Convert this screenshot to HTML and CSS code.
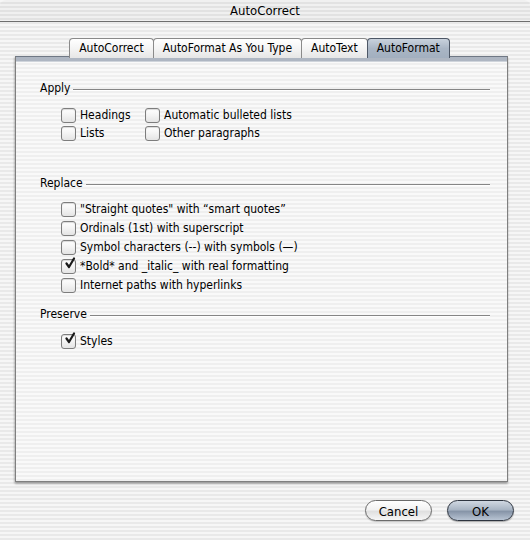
FILE: index.html
```html
<!DOCTYPE html>
<html>
<head>
<meta charset="utf-8">
<link rel="stylesheet" href="styles.css">
</head>
<body>
<div class="window">
  <div class="titlebar">AutoCorrect</div>
  <div class="tabs">
    <div class="tab">AutoCorrect</div>
    <div class="tab">AutoFormat As You Type</div>
    <div class="tab">AutoText</div>
    <div class="tab active">AutoFormat</div>
  </div>
  <div class="panel">
    <div class="group">
      <div class="group-head"><span class="group-title">Apply</span><span class="rule"></span></div>
      <div class="grid2">
        <label class="check"><span class="box"></span>Headings</label>
        <label class="check"><span class="box"></span>Automatic bulleted lists</label>
        <label class="check"><span class="box"></span>Lists</label>
        <label class="check"><span class="box"></span>Other paragraphs</label>
      </div>
    </div>
    <div class="group replace">
      <div class="group-head"><span class="group-title">Replace</span><span class="rule"></span></div>
      <div class="list">
        <label class="check"><span class="box"></span>"Straight quotes" with “smart quotes”</label>
        <label class="check"><span class="box"></span>Ordinals (1st) with superscript</label>
        <label class="check"><span class="box"></span>Symbol characters (--) with symbols (—)</label>
        <label class="check"><span class="box on"><svg viewBox="0 0 14 14" width="14" height="14"><path d="M3.5 6.5 L6 10 L11 1.5" fill="none" stroke="#1a1a1a" stroke-width="2.2" stroke-linecap="round" stroke-linejoin="round"/></svg></span>*Bold* and _italic_ with real formatting</label>
        <label class="check"><span class="box"></span>Internet paths with hyperlinks</label>
      </div>
    </div>
    <div class="group preserve">
      <div class="group-head"><span class="group-title">Preserve</span><span class="rule"></span></div>
      <div class="list">
        <label class="check"><span class="box on"><svg viewBox="0 0 14 14" width="14" height="14"><path d="M3.5 6.5 L6 10 L11 1.5" fill="none" stroke="#1a1a1a" stroke-width="2.2" stroke-linecap="round" stroke-linejoin="round"/></svg></span>Styles</label>
      </div>
    </div>
  </div>
  <div class="buttons">
    <div class="btn cancel">Cancel</div>
    <div class="btn ok">OK</div>
  </div>
</div>
</body>
</html>
```

FILE: styles.css
```css
html, body {
  margin: 0;
  padding: 0;
}
body {
  width: 530px;
  height: 540px;
  overflow: hidden;
  font-family: "DejaVu Sans Condensed", "DejaVu Sans", sans-serif;
  font-stretch: semi-condensed;
  font-size: 12px;
  color: #000;
  background: repeating-linear-gradient(to bottom, #f6f6f6 0 2px, #e9e9e9 2px 4px);
}
.window {
  width: 530px;
  height: 540px;
  display: flex;
  flex-direction: column;
}
.titlebar {
  height: 21px;
  border-bottom: 1px solid #6e6e6e;
  border-radius: 6px 6px 0 0;
  text-align: center;
  line-height: 22px;
  font-size: 13px;
  background: repeating-linear-gradient(to bottom, #f0f0f0 0 2px, #e2e2e2 2px 4px);
}
.tabs {
  display: flex;
  justify-content: center;
  margin-top: 16px;
  height: 20px;
  padding-right: 10px;
  position: relative;
  z-index: 1;
}
.tab {
  height: 19px;
  line-height: 19px;
  padding: 0 9px;
  border: 1px solid #8a8a8a;
  border-bottom: none;
  border-radius: 4px 4px 0 0;
  background: linear-gradient(to bottom, #ffffff 0%, #f4f4f4 50%, #e6e6e6 100%);
  margin-left: -1px;
  font-size: 12px;
}
.tab.active {
  border-color: #4d5766;
  background: linear-gradient(to bottom, #c9d2dd 0%, #aab6c5 50%, #a2afbf 100%);
}
.panel {
  margin: -2px 22px 0 15px;
  height: 424px;
  border: 1px solid #7f7f7f;
  border-top: 1px solid #6f7885;
  box-shadow: 0 2px 2px rgba(0,0,0,0.25), -1px 1px 2px rgba(0,0,0,0.15);
  background:
    linear-gradient(to bottom, #aeb6c2 0 4px, #cfd4db 4px 5px, transparent 5px),
    repeating-linear-gradient(to bottom, #f9f9f9 0 2px, #efefef 2px 4px);
  padding: 0 17px 0 24px;
}
.group-head {
  display: flex;
  align-items: center;
  height: 16px;
}
.group-title {
  font-size: 12px;
}
.rule {
  flex: 1;
  height: 1px;
  background: #868686;
  margin: 4px 0 0 3px;
  border-bottom: 1px solid #fff;
}
.group {
  margin-top: 23px;
}
.group.replace {
  margin-top: 35px;
}
.group.preserve {
  margin-top: 14px;
}
.grid2 {
  display: grid;
  grid-template-columns: 84px auto;
  row-gap: 4px;
  margin: 12px 0 0 21px;
}
.list {
  display: flex;
  flex-direction: column;
  gap: 5px;
  margin: 11px 0 0 21px;
}
.group.preserve .list {
  margin-top: 12px;
}
.check {
  display: flex;
  align-items: center;
  height: 14px;
  white-space: nowrap;
  font-size: 12px;
}
.box {
  width: 13px;
  height: 13px;
  border: 1px solid #7d7d7d;
  border-radius: 3px;
  background: linear-gradient(to bottom, #ffffff 0%, #f3f3f3 50%, #e4e4e4 100%);
  box-shadow: inset 0 1px 1px rgba(0,0,0,0.15);
  margin-right: 4px;
  flex: none;
  position: relative;
}
.box svg {
  position: absolute;
  left: 1px;
  top: -3px;
}
.buttons {
  display: flex;
  justify-content: flex-end;
  gap: 15px;
  margin: 18px 16px 0 0;
}
.btn {
  width: 67px;
  height: 21px;
  line-height: 21px;
  text-align: center;
  border-radius: 11px;
  font-size: 13px;
  box-sizing: border-box;
}
.btn.cancel {
  border: 1px solid #6b6b6b;
  background: linear-gradient(to bottom, #ffffff 0%, #f2f2f2 45%, #e0e0e0 55%, #f6f6f6 100%);
  box-shadow: 0 1px 1px rgba(0,0,0,0.2);
}
.btn.ok {
  border: 1px solid #2e3540;
  background: linear-gradient(to bottom, #d0d8e2 0%, #a9b5c4 45%, #8795a8 55%, #b8c4d3 100%);
  box-shadow: 0 1px 1px rgba(0,0,0,0.3);
}
```
